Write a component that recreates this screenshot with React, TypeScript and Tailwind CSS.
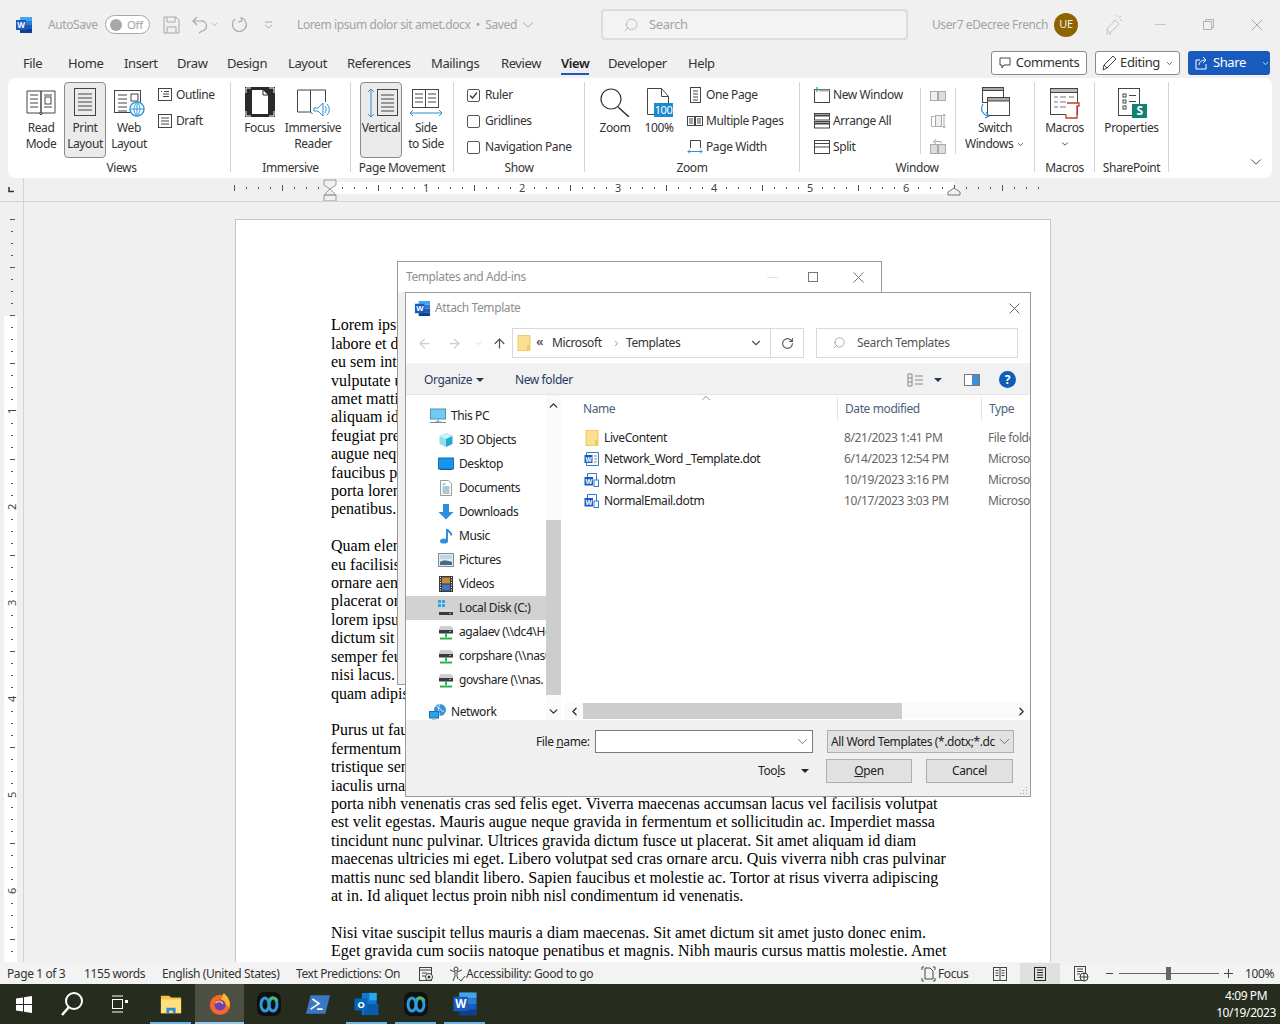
import type { ReactNode } from "react";
import { ChevronDown, ChevronUp, ChevronLeft, ChevronRight, ArrowLeft, ArrowRight, ArrowUp, RotateCw, Search } from "lucide-react";

const s = { fill: "none", stroke: "#444", strokeWidth: 1 };

function WinX({ size, color }: { size: number; color: string }) {
  return (
    <svg width={size} height={size} viewBox={`0 0 ${size} ${size}`} className="shrink-0">
      <path d={`M0.500 0.500L${size - 0.5} ${size - 0.5}M${size - 0.5} 0.500L0.500 ${size - 0.5}`} stroke={color} fill="none" />
    </svg>
  );
}

function WordIcon({ size = 18 }: { size?: number }) {
  return (
    <svg width={size} height={size} viewBox="0 0 18 18">
      <rect x="5" y="1" width="12" height="4" fill="#41a5ee" />
      <rect x="5" y="5" width="12" height="4" fill="#2b7cd3" />
      <rect x="5" y="9" width="12" height="4" fill="#185abd" />
      <rect x="5" y="13" width="12" height="4" fill="#103f91" />
      <rect x="1" y="4" width="10" height="10" fill="#185abd" />
      <text x="6" y="12" fontSize="8" fontWeight="700" fill="#fff" textAnchor="middle">W</text>
    </svg>
  );
}

function SmallDoc({ name }: { name: string }) {
  if (name === "doc") {
    return (
      <svg width="16" height="16" viewBox="0 0 16 16">
        <path d="M2.500 5V1.500h12v13h-12V12" {...s} stroke="#2b7cd3" />
        <path d="M10 5h3M10 8h3M10 11h3" {...s} stroke="#888" />
        <rect x="0.500" y="4" width="8" height="8" fill="#185abd" />
        <text x="4.500" y="10.500" fontSize="6.500" fontWeight="700" fill="#fff" textAnchor="middle">W</text>
      </svg>
    );
  }
  return (
    <svg width="16" height="16" viewBox="0 0 16 16">
      <path d="M3.500 5V1.500h9v7" {...s} stroke="#2b7cd3" />
      <rect x="10" y="8" width="4.500" height="6.500" fill="#fff" stroke="#2b7cd3" />
      <rect x="0.500" y="5" width="8.500" height="8.500" fill="#185abd" />
      <text x="4.700" y="11.700" fontSize="7" fontWeight="700" fill="#fff" textAnchor="middle">W</text>
    </svg>
  );
}

function FolderTall() {
  return (
    <svg width="14" height="16" viewBox="0 0 14 16">
      <rect x="1" y="0.500" width="12" height="15" fill="#fbe08f" stroke="#e9cb70" />
      <rect x="10" y="10" width="3" height="5.500" fill="#eccb62" />
    </svg>
  );
}

function NavIcon({ kind }: { kind: string }) {
  switch (kind) {
    case "pc":
      return (
        <svg width="18" height="16" viewBox="0 0 18 16">
          <rect x="1.500" y="1" width="15" height="10" fill="#6fcdf5" stroke="#5a8fb0" />
          <path d="M6 14h6M9 11v3M1 14.500h16" stroke="#6d8fa8" />
        </svg>
      );
    case "3d":
      return (
        <svg width="16" height="16" viewBox="0 0 16 16">
          <path d="M8 1l6.500 3v8L8 15z" fill="#23a9cf" />
          <path d="M8 1L1.500 4v8L8 15z" fill="#8fe0ee" />
          <path d="M1.500 4L8 7l6.500-3L8 1z" fill="#c8f2f6" />
        </svg>
      );
    case "desktop":
      return (
        <svg width="16" height="14" viewBox="0 0 16 14">
          <rect x="0.500" y="1" width="15" height="11" fill="#1b93ea" stroke="#0c6fbb" />
          <rect x="2" y="12" width="12" height="1" fill="#0c5b9b" />
        </svg>
      );
    case "docs":
      return (
        <svg width="14" height="16" viewBox="0 0 14 16">
          <path d="M1.500.5h8l3 3v12h-11z" fill="#fff" stroke="#9a9a9a" />
          <path d="M3.500 4h3M3.500 7h7M3.500 9h7M3.500 11h7M3.500 13h7" stroke="#5a8fb0" />
        </svg>
      );
    case "down":
      return (
        <svg width="16" height="16" viewBox="0 0 16 16">
          <path d="M5 0h6v8h4.500L8 15.500.5 8H5z" fill="#2f8de0" />
        </svg>
      );
    case "music":
      return (
        <svg width="14" height="16" viewBox="0 0 14 16">
          <ellipse cx="5" cy="13" rx="4" ry="2.600" fill="#2f8de0" />
          <path d="M8 13V1c1 2.500 4.500 3 4.500 6.500" fill="none" stroke="#2f8de0" strokeWidth="2" />
        </svg>
      );
    case "pics":
      return (
        <svg width="16" height="14" viewBox="0 0 16 14">
          <rect x="0.500" y="0.500" width="15" height="13" fill="#dfeaf5" stroke="#8a8a8a" />
          <path d="M2 9c3-2 6-2 12 0v3H2z" fill="#456a82" />
          <rect x="2" y="2" width="12" height="4" fill="#b9d8ee" />
        </svg>
      );
    case "video":
      return (
        <svg width="14" height="16" viewBox="0 0 14 16">
          <rect width="14" height="16" fill="#3a3a3a" />
          <rect x="3" y="1.500" width="8" height="6" fill="#c58a3b" />
          <rect x="3" y="8.500" width="8" height="6" fill="#3f77c2" />
          <path d="M1.500 1v14M12.500 1v14" stroke="#fff" strokeDasharray="1 1.500" />
        </svg>
      );
    case "disk":
      return (
        <svg width="16" height="16" viewBox="0 0 16 16">
          <rect x="0" y="0" width="3" height="3" fill="#29a8f0" />
          <rect x="4" y="0" width="3" height="3" fill="#29a8f0" />
          <rect x="0" y="4" width="3" height="3" fill="#29a8f0" />
          <rect x="4" y="4" width="3" height="3" fill="#29a8f0" />
          <path d="M3 9h10l2 2v4H1v-4z" fill="#d8d8d8" />
          <rect x="1" y="12" width="14" height="3" fill="#3a3a3a" />
          <rect x="11" y="13" width="2" height="1" fill="#4fe04f" />
        </svg>
      );
    case "share":
      return (
        <svg width="16" height="16" viewBox="0 0 16 16">
          <path d="M3 2h10l2 2v3H1V4z" fill="#cfcfcf" />
          <rect x="1" y="6" width="14" height="3.500" fill="#3a3a3a" />
          <rect x="11" y="7" width="2" height="1" fill="#4fe04f" />
          <path d="M8 9.500V13M2 14.500h12" stroke="#27b24a" strokeWidth="2" />
        </svg>
      );
    default:
      return (
        <svg width="18" height="18" viewBox="0 0 18 18">
          <circle cx="11" cy="7" r="6" fill="#3a93dd" />
          <path d="M7 3c3 1 5 5 8 6M11 1c-2 3-2 8 0 12" stroke="#cfe8f8" fill="none" />
          <rect x="0.500" y="8.500" width="9" height="6.500" fill="#2aa3e8" stroke="#1c6fa8" />
          <path d="M3 17h4" stroke="#6d8fa8" />
        </svg>
      );
  }
}

function RibbonIcon({ kind }: { kind: string }) {
  switch (kind) {
    case "read":
      return (
        <svg width="32" height="30" viewBox="0 0 32 30">
          <path d="M2 4l14 0v22H2zM16 4h14v22H16z" {...s} />
          <path d="M5 8h8M5 12h8M5 16h8M5 20h8M19 8h8M19 20h8" {...s} />
          <rect x="20" y="10" width="6" height="7" {...s} />
          <path d="M14 26l2 2 2-2" {...s} />
        </svg>
      );
    case "print":
      return (
        <svg width="24" height="30" viewBox="0 0 24 30">
          <rect x="1.500" y="1.500" width="21" height="27" {...s} />
          <path d="M5 7h14M5 11h14M5 15h14M5 19h14M5 23h14" {...s} />
        </svg>
      );
    case "web":
      return (
        <svg width="32" height="30" viewBox="0 0 32 30">
          <rect x="1.500" y="3.500" width="26" height="22" {...s} />
          <path d="M5 8h9M5 12h9M5 16h9M5 20h9M5 24h9" {...s} />
          <rect x="18" y="7" width="7" height="7" {...s} />
          <circle cx="24" cy="22" r="7" fill="#fff" stroke="#2f9bd8" strokeWidth="1.500" />
          <path d="M17 22h14M24 15v14M24 15c-4 4-4 10 0 14M24 15c4 4 4 10 0 14" fill="none" stroke="#2f9bd8" />
        </svg>
      );
    case "focus":
      return (
        <svg width="30" height="30" viewBox="0 0 30 30">
          <rect width="30" height="30" fill="#2a2a2a" />
          <path d="M1 6V1h5M24 1h5v5M29 24v5h-5M6 29H1v-5" fill="none" stroke="#fff" />
          <path d="M7 3h11l5 5v19H7z" fill="#fff" />
          <path d="M18 3v5h5" fill="none" stroke="#2a2a2a" />
        </svg>
      );
    case "reader":
      return (
        <svg width="34" height="32" viewBox="0 0 34 32">
          <path d="M1.500 3h13v22h-13zM14.500 3h15v12" {...s} />
          <path d="M14.500 25l2 2" {...s} />
          <path d="M18 21h4l5-5v13l-5-5h-4z" fill="#fff" stroke="#2f8fd0" />
          <path d="M29 19c1.500 1.500 1.500 5 0 7M31 17c3 3 3 8 0 11" fill="none" stroke="#2f8fd0" />
        </svg>
      );
    case "vertical":
      return (
        <svg width="36" height="32" viewBox="0 0 36 32">
          <path d="M8 2v28M5 5l3-3 3 3M5 27l3 3 3-3" fill="none" stroke="#2f8fd0" />
          <rect x="14.500" y="2.500" width="20" height="26" {...s} />
          <path d="M18 8h13M18 12h13M18 16h13M18 20h13M18 24h13" {...s} />
        </svg>
      );
    case "side":
      return (
        <svg width="34" height="30" viewBox="0 0 34 30">
          <rect x="3.500" y="2.500" width="13" height="18" {...s} />
          <rect x="16.500" y="2.500" width="13" height="18" {...s} />
          <path d="M6 7h8M6 11h8M6 15h8M19 7h8M19 11h8M19 15h8" {...s} />
          <path d="M1 26h32M4 23l-3 3 3 3M30 23l3 3-3 3" fill="none" stroke="#2f8fd0" />
        </svg>
      );
    case "zoom":
      return (
        <svg width="32" height="30" viewBox="0 0 32 30">
          <circle cx="12" cy="12" r="10" fill="none" stroke="#333" strokeWidth="1.200" />
          <path d="M19 20l11 10" stroke="#333" strokeWidth="1.600" />
        </svg>
      );
    case "hundred":
      return (
        <svg width="28" height="30" viewBox="0 0 28 30">
          <path d="M2.500 1.500h14l7 8v18h-21z" fill="#fff" stroke="#444" />
          <path d="M16.500 1.500v8h7" {...s} />
          <rect x="9" y="16" width="19" height="14" fill="#1c8ad0" />
          <text x="18.500" y="27" fontSize="11" fill="#fff" textAnchor="middle" letterSpacing="-0.5">100</text>
        </svg>
      );
    case "switch":
      return (
        <svg width="32" height="32" viewBox="0 0 32 32">
          <rect x="3.500" y="0.500" width="21" height="15" {...s} />
          <rect x="3.500" y="0.500" width="21" height="3" fill="#aaa" stroke="#444" />
          <rect x="8.500" y="10.500" width="22" height="18" fill="#fff" stroke="#444" />
          <rect x="8.500" y="10.500" width="22" height="3.500" fill="#aaa" stroke="#444" />
          <path d="M4 17c-3 5-1 11 6 12M7 25l3 4-4 2" fill="none" stroke="#2f8fd0" strokeWidth="1.200" />
        </svg>
      );
    case "macros":
      return (
        <svg width="32" height="32" viewBox="0 0 32 32">
          <rect x="1.500" y="1.500" width="27" height="26" {...s} />
          <rect x="1.500" y="1.500" width="27" height="4" fill="#bbb" stroke="#444" />
          <path d="M5 10h4M11 10h6M20 10h5M5 15h4M11 15h6M5 20h4M11 20h6" fill="none" stroke="#777" />
          <path d="M18 16h12v3h-2v12H17v-3h-1" fill="#fff" stroke="#c8392b" strokeWidth="1.300" />
        </svg>
      );
    default:
      return (
        <svg width="30" height="32" viewBox="0 0 30 32">
          <rect x="1.500" y="1.500" width="21" height="27" {...s} />
          <rect x="6" y="7" width="3" height="3" {...s} />
          <rect x="6" y="13" width="3" height="3" {...s} />
          <rect x="6" y="19" width="3" height="3" {...s} />
          <path d="M12 8.500h7M12 14.500h7" {...s} />
          <rect x="15" y="17" width="15" height="14" fill="#108272" />
          <text x="22.500" y="28" fontSize="12" fontWeight="700" fill="#fff" textAnchor="middle">S</text>
        </svg>
      );
  }
}

function SmallIcon({ kind }: { kind: string }) {
  const lines: Record<string, ReactNode> = {
    outline: <><rect x="1.500" y="1.500" width="13" height="12" {...s} /><path d="M4 4.500h1M7 4.500h5M6 7h6M6 9.500h6" {...s} /></>,
    draft: <><rect x="1.500" y="1.500" width="13" height="13" {...s} /><path d="M4 5h8M4 8h8M4 11h8" {...s} /></>,
    onepage: <><rect x="3.500" y="0.500" width="10" height="15" {...s} /><path d="M6 4h5M6 7h5M6 10h5M6 13h5" {...s} /></>,
    multi: <><rect x="0.500" y="3.500" width="7" height="9" {...s} /><rect x="8.500" y="3.500" width="7" height="9" {...s} /><path d="M2 6h4M2 8h4M2 10h4M10 6h4M10 8h4M10 10h4" {...s} /></>,
    width: <><path d="M3.500 9V1.500h10V9" {...s} /><path d="M1 12.500h14M3 10.500l-2 2 2 2M13 10.500l2 2-2 2" fill="none" stroke="#2f8fd0" /></>,
    newwin: <><rect x="0.500" y="2.500" width="15" height="13" {...s} /><rect x="5" y="2.500" width="10.500" height="2" fill="#aaa" /><path d="M3 0v5M0.500 2.500h5" stroke="#1e8a3c" /></>,
    arrange: <><rect x="0.500" y="0.500" width="15" height="6.500" {...s} /><rect x="0.500" y="8.500" width="15" height="6.500" {...s} /><path d="M1 2.500h14M1 10.500h14" stroke="#444" strokeWidth="2" /></>,
    split: <><rect x="0.500" y="1.500" width="15" height="13" {...s} /><path d="M1 4.500h14M1 8h14" {...s} /></>,
    ghost1: <><rect x="0.500" y="3.500" width="7" height="9" fill="#eee" stroke="#aaa" /><rect x="8.500" y="3.500" width="7" height="9" fill="#ddd" stroke="#aaa" /></>,
    ghost2: <><path d="M1.500 3.500h3M1.500 3.500v10h3" fill="none" stroke="#aaa" /><rect x="5.500" y="2.500" width="6" height="11" fill="#eee" stroke="#aaa" /><path d="M14 1v14M12.500 3l1.500-2 1.500 2M12.500 13l1.500 2 1.500-2" fill="none" stroke="#aaa" /></>,
    ghost3: <><path d="M6 1L3.500 3.500 6 6M4 3.500h7v2" fill="none" stroke="#aaa" /><rect x="0.500" y="6.500" width="7" height="9" fill="#ddd" stroke="#aaa" /><rect x="8.500" y="6.500" width="7" height="9" fill="#ddd" stroke="#aaa" /></>,
  };
  return <svg width="16" height="16" viewBox="0 0 16 16" className="shrink-0">{lines[kind]}</svg>;
}

function BigButton({ icon, top, bottom, className, selected }: { icon: string; top: string; bottom?: ReactNode; className: string; selected?: boolean }) {
  return (
    <div className={`${className} h-[76px] flex flex-col items-center rounded-[4px] border ${selected ? "bg-[#ebebeb] border-[#8a8a8a]" : "border-transparent"}`}>
      <div className="h-[37px] pt-[4px] flex items-start justify-center">
        <RibbonIcon kind={icon} />
      </div>
      <div className="leading-[16px] text-center whitespace-nowrap">{top}</div>
      {bottom && <div className="leading-[16px] text-center whitespace-nowrap">{bottom}</div>}
    </div>
  );
}

function SmallButton({ icon, label }: { icon: string; label: string }) {
  return (
    <div className="h-[26px] shrink-0 flex items-center gap-[3px] whitespace-nowrap">
      <SmallIcon kind={icon} />
      <span>{label}</span>
    </div>
  );
}

function Group({ label, className, labelClass, children }: { label: string; className: string; labelClass?: string; children: ReactNode }) {
  return (
    <div className={`${className} h-[90px] border-r border-[#d4d4d4] flex flex-col`}>
      <div className="h-[76px] flex">{children}</div>
      <div className={`leading-[20px] text-center text-[#333] ${labelClass ?? ""}`}>{label}</div>
    </div>
  );
}

function Check({ on, label }: { on?: boolean; label: string }) {
  return (
    <div className="h-[26px] shrink-0 flex items-center gap-[5px] whitespace-nowrap">
      <div className="w-[13px] h-[13px] border border-[#555] rounded-[2px] flex items-center justify-center">
        {on && (
          <svg width="9" height="9" viewBox="0 0 9 9">
            <path d="M1 4.500l2.500 2.500L8 1.500" fill="none" stroke="#333" strokeWidth="1.200" />
          </svg>
        )}
      </div>
      <span>{label}</span>
    </div>
  );
}

const tabs = [
  { label: "File", w: "w-[45px]" },
  { label: "Home", w: "w-[56px]" },
  { label: "Insert", w: "w-[53px]" },
  { label: "Draw", w: "w-[50px]" },
  { label: "Design", w: "w-[61px]" },
  { label: "Layout", w: "w-[59px]" },
  { label: "References", w: "w-[84px]" },
  { label: "Mailings", w: "w-[70px]" },
  { label: "Review", w: "w-[60px]" },
  { label: "View", w: "w-[47px]" },
  { label: "Developer", w: "w-[80px]" },
  { label: "Help", w: "w-[40px]" },
];

function TitleBar() {
  return (
    <div className="h-[48px] pt-[1px] flex items-center text-[#a3a3a3] text-[12px]">
      <div className="ml-[15px] w-[18px]"><WordIcon /></div>
      <span className="ml-[15px] w-[52px]">AutoSave</span>
      <div className="ml-[5px] w-[45px] h-[19px] rounded-full border border-[#a8a8a8] bg-white flex items-center pl-[4px] gap-[5px] text-[11.500px]">
        <div className="w-[12px] h-[12px] rounded-full bg-[#a8a8a8]" />
        <span>Off</span>
      </div>
      <svg className="ml-[13px]" width="17" height="18" viewBox="0 0 17 18">
        <path d="M1 1h12l3 3v13H1zM4 1v5h8V1M4 17v-6h9v6" fill="none" stroke="#a8a8a8" />
      </svg>
      <svg className="ml-[12px]" width="16" height="18" viewBox="0 0 16 18">
        <path d="M5 1L1 5l4 4M1 5h8a5 5 0 0 1 1 10l-3 2" fill="none" stroke="#a8a8a8" strokeWidth="1.200" />
      </svg>
      <ChevronDown className="ml-[2px] text-[#a8a8a8]" size={9} />
      <svg className="ml-[11px]" width="18" height="18" viewBox="0 0 18 18">
        <path d="M5 3a7 7 0 1 0 7-1M11 1l1 4 -4 1" fill="none" stroke="#a8a8a8" strokeWidth="1.200" />
      </svg>
      <svg className="ml-[16px]" width="9" height="10" viewBox="0 0 9 10">
        <path d="M1 2h7M1 5l3.500 3L8 5" fill="none" stroke="#a8a8a8" />
      </svg>
      <span className="ml-[24px] w-[304px] whitespace-nowrap flex items-center gap-[2px]">
        Lorem ipsum dolor sit amet.docx&nbsp; •&nbsp; Saved <ChevronDown size={18} strokeWidth={1.300} />
      </span>
      <div className="w-[307px] h-[31px] border-2 border-[#dcdcdc] rounded-[4px] bg-[#f3f3f3] flex items-center pl-[20px] gap-[10px] text-[13px]">
        <Search size={16} className="scale-x-[-1]" strokeWidth={1} />
        <span>Search</span>
      </div>
      <span className="ml-[24px] w-[122px] whitespace-nowrap">User7 eDecree French</span>
      <div className="w-[24px] h-[24px] rounded-full bg-[#8f6300] text-[#eee] text-[11px] flex items-center justify-center">UE</div>
      <svg className="ml-[27px]" width="18" height="22" viewBox="0 0 18 22">
        <path d="M5 19L2 15l8-9 4 4zM2 15v5h4M12 3V1M15 6h2M14 4l2-2" fill="none" stroke="#c4c4c4" />
      </svg>
      <div className="ml-[32px] w-[11px] h-[1px] bg-[#c4c4c4]" />
      <svg className="ml-[37px]" width="11" height="11" viewBox="0 0 11 11">
        <path d="M0.500 2.500h8v8h-8zM2.500 2.500v-2h8v8h-2" fill="none" stroke="#b0b0b0" />
      </svg>
      <div className="ml-[37px]"><WinX size={12} color="#a8a8a8" /></div>
    </div>
  );
}

function TabRow() {
  return (
    <div className="h-[30px] pt-[1px] flex items-center pl-[23px] pr-[10px] text-[13px] text-[#333]">
      {tabs.map((t) => (
        <div key={t.label} className={`${t.w} h-full flex items-center relative`}>
          <span className={t.label === "View" ? "font-semibold text-[#222] border-b-2 border-[#185abd] leading-[20px] mt-[1px]" : ""}>{t.label}</span>
        </div>
      ))}
      <div className="ml-auto flex items-center gap-[8px] -mt-[1px]">
        <div className="w-[96px] h-[24px] border border-[#8a8a8a] rounded-[3px] bg-white flex items-center justify-center gap-[5px]">
          <svg width="12" height="12" viewBox="0 0 12 12"><path d="M1 1h10v7H5l-2 3V8H1z" fill="none" stroke="#444" /></svg>
          Comments
        </div>
        <div className="w-[85px] h-[24px] border border-[#8a8a8a] rounded-[3px] bg-white flex items-center justify-center gap-[3px]">
          <svg width="16" height="18" viewBox="0 0 16 18"><path d="M2 16l1-5L12 2l3 3-9 9zM3 11l3 3" fill="none" stroke="#444" /></svg>
          Editing <ChevronDown size={9} className="ml-[2px]" />
        </div>
        <div className="w-[82px] h-[24px] rounded-[3px] bg-[#185abd] text-white flex items-center pl-[7px] gap-[5px]">
          <svg width="13" height="14" viewBox="0 0 13 14"><path d="M5 4H1v9h10V8M4 9c0-3 3-5 6-5M8 1l3 3-3 3" fill="none" stroke="#fff" /></svg>
          Share
          <ChevronDown size={9} className="ml-[10px]" />
        </div>
      </div>
    </div>
  );
}

function Ribbon() {
  return (
    <div className="ml-[8px] w-[1264px] h-[100px] bg-white rounded-[7px] pt-[4px] flex text-[12px] text-[#333]">
      <Group label="Views" className="w-[223px]" labelClass="pl-[5px]">
        <div className="w-[10px]" />
        <BigButton icon="read" top="Read" bottom="Mode" className="w-[46px]" />
        <BigButton icon="print" top="Print" bottom="Layout" className="w-[42px]" selected />
        <BigButton icon="web" top="Web" bottom="Layout" className="w-[46px]" />
        <div className="ml-[5px] flex flex-col">
          <SmallButton icon="outline" label="Outline" />
          <SmallButton icon="draft" label="Draft" />
        </div>
      </Group>
      <Group label="Immersive" className="w-[120px]">
        <div className="w-[8px]" />
        <BigButton icon="focus" top="Focus" className="w-[41px]" />
        <BigButton icon="reader" top="Immersive" bottom="Reader" className="w-[66px]" />
      </Group>
      <Group label="Page Movement" className="w-[103px]">
        <div className="w-[9px]" />
        <BigButton icon="vertical" top="Vertical" className="w-[42px]" selected />
        <BigButton icon="side" top="Side" bottom="to Side" className="w-[48px]" />
      </Group>
      <Group label="Show" className="w-[131px]">
        <div className="pl-[13px] flex flex-col">
          <Check on label="Ruler" />
          <Check label="Gridlines" />
          <Check label="Navigation Pane" />
        </div>
      </Group>
      <Group label="Zoom" className="w-[215px]">
        <div className="w-[9px]" />
        <BigButton icon="zoom" top="Zoom" className="w-[42px]" />
        <BigButton icon="hundred" top="100%" className="w-[46px]" />
        <div className="ml-[5px] flex flex-col">
          <SmallButton icon="onepage" label="One Page" />
          <SmallButton icon="multi" label="Multiple Pages" />
          <SmallButton icon="width" label="Page Width" />
        </div>
      </Group>
      <Group label="Window" className="w-[235px]">
        <div className="pl-[14px] w-[120px] flex flex-col">
          <SmallButton icon="newwin" label="New Window" />
          <SmallButton icon="arrange" label="Arrange All" />
          <SmallButton icon="split" label="Split" />
        </div>
        <div className="w-[36px] h-[66px] mt-[6px] border-x border-[#d4d4d4] flex flex-col items-center justify-between">
          <SmallIcon kind="ghost1" />
          <SmallIcon kind="ghost2" />
          <SmallIcon kind="ghost3" />
        </div>
        <div className="w-[3px]" />
        <BigButton icon="switch" top="Switch" bottom={<>Windows <ChevronDown size={9} className="inline" /></>} className="w-[72px]" />
      </Group>
      <Group label="Macros" className="w-[60px]">
        <div className="w-full h-[76px] flex flex-col items-center pt-[5px]">
          <RibbonIcon kind="macros" />
          <div className="leading-[16px] mt-[1px]">Macros</div>
          <ChevronDown size={10} className="mt-[3px]" />
        </div>
      </Group>
      <Group label="SharePoint" className="w-[74px]">
        <BigButton icon="props" top="Properties" className="w-full" />
      </Group>
      <div className="flex-1 flex items-end justify-end pr-[7px] pb-[7px]">
        <ChevronDown size={18} strokeWidth={1.200} />
      </div>
    </div>
  );
}

const hTicks = Array.from({ length: 68 }, (_, i) => 234 + i * 12);

function HRuler() {
  return (
    <svg width="1280" height="24" viewBox="0 0 1280 24" className="block">
      <rect x="330" y="4" width="624" height="12" fill="#fff" />
      {hTicks.map((x) => {
        const n = x - 330;
        if (n > 0 && n % 96 === 0 && n / 96 < 7) {
          return <text key={x} x={x} y="14" fontSize="11" fill="#444" textAnchor="middle">{n / 96}</text>;
        }
        return n % 48 === 0 ? (
          <path key={x} d={`M${x + 0.5} 7v6`} stroke="#555" />
        ) : (
          <path key={x} d={`M${x + 0.5} 9v2`} stroke="#555" />
        );
      })}
      <path d="M324 2h12v5l-6 4-6-4zM324 17l6-6 6 6zM324 17h12v6h-12z" fill="#f0f0f0" stroke="#999" />
      <path d="M948 17v-3l6-4 6 4v3z" fill="#f0f0f0" stroke="#777" />
      <path d="M0 23.500h1280" stroke="#d4d4d4" />
      <path d="M23.500 0v24" stroke="#d4d4d4" />
      <path d="M9 9v4.500h5" fill="none" stroke="#333" strokeWidth="1.500" />
    </svg>
  );
}

const vTicks = Array.from({ length: 62 }, (_, i) => 219 - 202 + i * 12);

function VRuler() {
  return (
    <svg width="24" height="760" viewBox="0 0 24 760" className="block shrink-0">
      <rect x="4" y="114" width="13" height="646" fill="#fff" />
      <path d="M23.500 0v760" stroke="#d4d4d4" />
      {vTicks.map((y) => {
        const n = y - 113;
        if (n > 0 && n % 96 === 0) {
          return <text key={y} x="12" y={y + 4} fontSize="11" fill="#444" textAnchor="middle" transform={`rotate(-90 12 ${y})`}>{n / 96}</text>;
        }
        return n % 48 === 0 ? (
          <path key={y} d={`M10 ${y + 0.5}h5`} stroke="#555" />
        ) : (
          <path key={y} d={`M11 ${y + 0.5}h2`} stroke="#555" />
        );
      })}
    </svg>
  );
}

const paragraphs = [
  [
    "Lorem ipsum dolor sit amet, consectetur adipiscing elit, sed do eiusmod tempor incididunt ut",
    "labore et dolore magna aliqua. Ornare quam viverra orci sagittis eu volutpat odio facilisis",
    "eu sem integer vitae justo eget magna fermentum iaculis eu non diam phasellus vestibulum",
    "vulputate ut pharetra sit amet aliquam id diam maecenas ultricies mi eget mauris pharetra",
    "amet mattis vulputate enim nulla aliquet porttitor lacus luctus accumsan tortor posuere ac",
    "aliquam id diam maecenas ultricies mi eget mauris pharetra et ultrices neque ornare aenean",
    "feugiat pretium nibh ipsum consequat nisl vel pretium lectus quam id leo in vitae turpis",
    "augue neque gravida in fermentum et sollicitudin ac orci phasellus egestas tellus rutrum",
    "faucibus purus in massa tempor nec feugiat nisl pretium fusce id velit ut tortor pretium",
    "porta lorem mollis aliquam ut porttitor leo a diam sollicitudin tempor id eu nisl nunc mi",
    "penatibus.",
  ],
  [
    "Quam elementum pulvinar etiam non quam lacus suspendisse faucibus interdum posuere lorem",
    "eu facilisis sed odio morbi quis commodo odio aenean sed adipiscing diam donec adipiscing",
    "ornare aenean euismod elementum nisi quis eleifend quam adipiscing vitae proin sagittis",
    "placerat orci nulla pellentesque dignissim enim sit amet venenatis urna cursus eget nunc",
    "lorem ipsum dolor sit amet consectetur adipiscing elit ut aliquam purus sit amet luctus",
    "dictum sit amet justo donec enim diam vulputate ut pharetra sit amet aliquam id diam",
    "semper feugiat nibh sed pulvinar proin gravida hendrerit lectus a molestie lorem ipsum",
    "nisi lacus. Sed viverra ipsum nunc aliquet bibendum enim facilisis gravida neque convallis",
    "quam adipiscing.",
  ],
  [
    "Purus ut faucibus pulvinar elementum integer enim neque volutpat ac tincidunt vitae semper",
    "fermentum leo vel orci porta non pulvinar neque laoreet suspendisse interdum consectetur",
    "tristique senectus et netus et malesuada fames ac turpis egestas integer eget aliquet nibh",
    "iaculis urna id volutpat lacus laoreet non curabitur gravida arcu ac tortor dignissim",
    "porta nibh venenatis cras sed felis eget. Viverra maecenas accumsan lacus vel facilisis volutpat",
    "est velit egestas. Mauris augue neque gravida in fermentum et sollicitudin ac. Imperdiet massa",
    "tincidunt nunc pulvinar. Ultrices gravida dictum fusce ut placerat. Sit amet aliquam id diam",
    "maecenas ultricies mi eget. Libero volutpat sed cras ornare arcu. Quis viverra nibh cras pulvinar",
    "mattis nunc sed blandit libero. Sapien faucibus et molestie ac. Tortor at risus viverra adipiscing",
    "at in. Id aliquet lectus proin nibh nisl condimentum id venenatis.",
  ],
  [
    "Nisi vitae suscipit tellus mauris a diam maecenas. Sit amet dictum sit amet justo donec enim.",
    "Eget gravida cum sociis natoque penatibus et magnis. Nibh mauris cursus mattis molestie. Amet",
    "aliquam vestibulum morbi blandit cursus risus at ultrices mi tempus imperdiet nulla",
  ],
];

function DocArea() {
  return (
    <div className="h-[760px] flex overflow-hidden">
      <VRuler />
      <div className="flex-1 pl-[211px] pt-[17px]">
        <div className="w-[816px] h-[800px] bg-white border border-[#c6c6c6] pl-[95px] pt-[96.4px] font-['Liberation_Serif',serif] text-[16px] leading-[18.4px] tracking-normal text-black">
          {paragraphs.map((p, i) => (
            <div key={i} className="mb-[18.4px]">
              {p.map((l) => (
                <div key={l} className="whitespace-nowrap">{l}</div>
              ))}
            </div>
          ))}
        </div>
      </div>
    </div>
  );
}

function StatusBar() {
  return (
    <div className="h-[22px] pt-[1px] bg-[#f3f3f3] flex items-center text-[12px] text-[#333] whitespace-nowrap">
      <span className="ml-[7px] w-[77px]">Page 1 of 3</span>
      <span className="w-[78px]">1155 words</span>
      <span className="w-[134px]">English (United States)</span>
      <span className="w-[122px]">Text Predictions: On</span>
      <svg width="16" height="16" viewBox="0 0 16 16" className="mr-[15px]">
        <rect x="1.500" y="1.500" width="12" height="13" {...s} />
        <path d="M1.500 4h12M4 7h5M4 10h3" {...s} />
        <circle cx="11" cy="11" r="3.500" fill="#fff" stroke="#333" />
        <circle cx="11" cy="11" r="1.500" fill="#333" />
      </svg>
      <svg width="17" height="16" viewBox="0 0 17 16">
        <circle cx="7" cy="3" r="2" {...s} />
        <path d="M1 4l5 2v4l-2 5M13 4l-5 2v4l1 3M10 13l2 2 4-5" {...s} />
      </svg>
      <span className="w-[455px]">Accessibility: Good to go</span>
      <svg width="15" height="16" viewBox="0 0 15 16" className="mr-[2px]">
        <path d="M1 4V1h2M14 4V1h-2M1 12v3h2M14 12v3h-2M4 13V2h5l3 3v8z" {...s} />
      </svg>
      <span className="w-[55px]">Focus</span>
      <svg width="14" height="14" viewBox="0 0 14 14" className="mr-[13px]">
        <rect x="0.500" y="0.500" width="13" height="13" {...s} />
        <path d="M7 0v14M2.500 3.500h3M2.500 6h3M2.500 8.500h3M8.500 3.500h3M8.500 6h3M8.500 8.500h3" {...s} />
      </svg>
      <div className="w-[40px] h-full bg-[#e0e0e0] flex items-center justify-center">
        <svg width="12" height="14" viewBox="0 0 12 14">
          <rect x="0.500" y="0.500" width="11" height="13" {...s} stroke="#222" />
          <path d="M3 3h6M3 5.500h6M3 8h6M3 10.500h6" {...s} stroke="#222" />
        </svg>
      </div>
      <svg width="16" height="16" viewBox="0 0 16 16" className="ml-[13px]">
        <rect x="1.500" y="0.500" width="11" height="14" {...s} />
        <path d="M4 3h6M4 5.500h6M4 8h3" {...s} />
        <circle cx="11" cy="11" r="4" fill="#fff" stroke="#333" />
        <path d="M7 11h8M11 7v8" stroke="#333" />
      </svg>
      <div className="ml-[17px] w-[7px] h-[1px] bg-[#444]" />
      <div className="ml-[6px] w-[100px] h-[1px] bg-[#666] relative">
        <div className="absolute left-[47px] -top-[6px] w-[5px] h-[13px] bg-[#666]" />
      </div>
      <svg width="9" height="9" viewBox="0 0 9 9" className="ml-[5px]"><path d="M4.500 0v9M0 4.500h9" stroke="#444" /></svg>
      <span className="ml-[12px]">100%</span>
    </div>
  );
}

function Taskbar() {
  return (
    <div className="h-[40px] bg-[#272d1e] flex items-center text-white text-[12px] relative">
      <div className="w-[48px] flex justify-center">
        <svg width="16" height="17" viewBox="0 0 16 17"><path d="M0 2.500l7-1v6.500H0zM8 1.300L16 0v8H8zM0 9h7v6.500l-7-1zM8 9h8v8l-8-1.300z" fill="#fff" /></svg>
      </div>
      <div className="w-[48px] flex justify-center">
        <svg width="24" height="26" viewBox="0 0 24 26"><circle cx="14" cy="10" r="8" fill="none" stroke="#fff" strokeWidth="2" /><path d="M9 16l-7 8" stroke="#fff" strokeWidth="2.500" /></svg>
      </div>
      <div className="w-[48px] flex justify-center">
        <svg width="18" height="18" viewBox="0 0 18 18"><rect x="1.500" y="4.500" width="10" height="9" fill="none" stroke="#fff" /><path d="M1 1h11M1 17h11" stroke="#fff" /><rect x="14" y="5" width="3" height="3" fill="#fff" /></svg>
      </div>
      <div className="w-[2px]" />
      <TaskItem active>
        <svg width="24" height="22" viewBox="0 0 24 24"><path d="M1 3h9l2 2h11v17H1z" fill="#f5c242" /><rect x="1" y="7" width="22" height="15" fill="#ffe07d" /><path d="M7 22v-6h10v6h-3v-3h-4v3z" fill="#2d8ad6" /></svg>
      </TaskItem>
      <TaskItem active highlight>
        <svg width="24" height="24" viewBox="0 0 26 26"><circle cx="13" cy="14" r="11" fill="#f7662a" /><path d="M17 1c5 4 8 10 6 16L14 8z" fill="#ffb52c" /><circle cx="13" cy="14" r="6" fill="#6b3fb8" /><path d="M8 12c3-3 7-2 8 1" fill="none" stroke="#ffb52c" strokeWidth="2" /></svg>
      </TaskItem>
      <TaskItem>
        <Webex />
      </TaskItem>
      <TaskItem>
        <svg width="24" height="19" viewBox="0 0 26 20"><path d="M5 0h21l-5 20H0z" fill="#3b78c4" /><path d="M7 4l7 5-9 6M12 15h6" fill="none" stroke="#fff" strokeWidth="1.800" /></svg>
      </TaskItem>
      <TaskItem active>
        <svg width="25" height="24" viewBox="0 0 26 26"><rect x="8" y="1" width="16" height="24" fill="#0f78d4" /><rect x="16" y="1" width="8" height="8" fill="#28a8ea" /><path d="M10 13h16v12H10z" fill="#0a5ba8" /><rect x="0" y="7" width="14" height="13" fill="#0364b8" /><text x="7" y="17" fontSize="10" fontWeight="700" fill="#fff" textAnchor="middle">O</text></svg>
      </TaskItem>
      <TaskItem active>
        <Webex />
      </TaskItem>
      <TaskItem active>
        <WordIcon size={26} />
      </TaskItem>
      <div className="ml-auto pr-[4px] text-center leading-[17px] text-[12px]">
        <div>4:09 PM</div>
        <div>10/19/2023</div>
      </div>
    </div>
  );
}

function Webex() {
  return (
    <svg width="24" height="24" viewBox="0 0 24 24">
      <rect width="24" height="24" rx="7" fill="#101010" />
      <ellipse cx="8" cy="12.500" rx="4" ry="6.500" fill="none" stroke="#2f9bd8" strokeWidth="3" />
      <ellipse cx="16" cy="12.500" rx="4" ry="6.500" fill="none" stroke="#2f9bd8" strokeWidth="3" />
      <path d="M13 8c1-3 6-3 7 1" fill="none" stroke="#45b96c" strokeWidth="3" />
    </svg>
  );
}

function TaskItem({ children, active, highlight }: { children: ReactNode; active?: boolean; highlight?: boolean }) {
  return (
    <div className={`w-[49px] h-[40px] flex items-center justify-center relative ${highlight ? "bg-[#4b5042]" : ""}`}>
      {children}
      {active && <div className={`absolute bottom-0 h-[2px] ${highlight ? "bg-[#8fc7ee] left-0 right-0" : "bg-[#6eb4e6] left-[4px] right-[4px]"}`} />}
    </div>
  );
}

const navItems = [
  { kind: "pc", label: "This PC", cls: "pl-[22px]" },
  { kind: "3d", label: "3D Objects", cls: "pl-[30px]" },
  { kind: "desktop", label: "Desktop", cls: "pl-[30px]" },
  { kind: "docs", label: "Documents", cls: "pl-[30px]" },
  { kind: "down", label: "Downloads", cls: "pl-[30px]" },
  { kind: "music", label: "Music", cls: "pl-[30px]" },
  { kind: "pics", label: "Pictures", cls: "pl-[30px]" },
  { kind: "video", label: "Videos", cls: "pl-[30px]" },
  { kind: "disk", label: "Local Disk (C:)", cls: "pl-[30px] bg-[#d2d2d2]" },
  { kind: "share", label: "agalaev (\\\\dc4\\Home", cls: "pl-[30px]" },
  { kind: "share", label: "corpshare (\\\\nas01", cls: "pl-[30px]" },
  { kind: "share", label: "govshare (\\\\nas.", cls: "pl-[30px] mb-[8px]" },
  { kind: "net", label: "Network", cls: "pl-[22px]" },
];

const files = [
  { icon: "folder", name: "LiveContent", date: "8/21/2023 1:41 PM", type: "File folder" },
  { icon: "doc", name: "Network_Word _Template.dot", date: "6/14/2023 12:54 PM", type: "Microsoft Word" },
  { icon: "dotm", name: "Normal.dotm", date: "10/19/2023 3:16 PM", type: "Microsoft Word" },
  { icon: "dotm", name: "NormalEmail.dotm", date: "10/17/2023 3:03 PM", type: "Microsoft Word" },
];

function BackDialog() {
  return (
    <div className="absolute left-[397px] top-[261px] w-[485px] h-[424px] bg-[#f0f0f0] border border-[#9a9a9a] text-[12px]">
      <div className="h-[30px] bg-white flex items-center pl-[8px] text-[#8e8e8e]">
        <span className="flex-1">Templates and Add-ins</span>
        <div className="w-[11px] h-[1px] bg-[#e2e2e2] mr-[30px]" />
        <div className="w-[10px] h-[10px] border border-[#777] mr-[35px]" />
        <div className="mr-[17px]"><WinX size={11} color="#777" /></div>
      </div>
    </div>
  );
}

function AttachDialog() {
  return (
    <div className="absolute left-[405px] top-[292px] w-[626px] h-[505px] bg-white border border-[#9a9a9a] flex flex-col text-[12px] text-[#222]">
      <div className="h-[30px] flex items-center pl-[8px] shrink-0">
        <WordIcon size={17} />
        <span className="ml-[4px] text-[#8e8e8e] flex-1">Attach Template</span>
        <div className="mr-[10px]"><WinX size={11} color="#666" /></div>
      </div>
      <div className="h-[40px] flex items-center shrink-0 text-[#333]">
        <ArrowLeft size={15} className="ml-[11px] text-[#ccc]" />
        <ArrowRight size={15} className="ml-[15px] text-[#ccc]" />
        <ChevronDown size={9} className="ml-[12px] text-[#ccc]" />
        <ArrowUp size={15} className="ml-[9px] text-[#555]" />
        <div className="ml-[5px] w-[292px] h-[30px] border border-[#d9d9d9] flex items-center">
          <div className="ml-[4px]"><FolderTall /></div>
          <span className="ml-[5px] w-[16px] text-[#555] text-[13px] font-semibold leading-none -mt-[3px]">«</span>
          <span className="w-[54px]">Microsoft</span>
          <div className="w-[20px] flex justify-center"><ChevronRight size={9} className="text-[#777]" /></div>
          <span className="flex-1">Templates</span>
          <ChevronDown size={14} className="mr-[7px] text-[#555]" strokeWidth={2} />
          <div className="w-[33px] h-full border-l border-[#d9d9d9] flex items-center justify-center">
            <RotateCw size={13} className="text-[#555]" strokeWidth={2} />
          </div>
        </div>
        <div className="ml-[12px] w-[202px] h-[30px] border border-[#d9d9d9] flex items-center pl-[15px] text-[#555]">
          <Search size={14} className="scale-x-[-1] text-[#777]" strokeWidth={1} />
          <span className="ml-[11px]">Search Templates</span>
        </div>
      </div>
      <div className="h-[32px] pt-[2px] bg-[#f1f1f1] flex items-center shrink-0 text-[#1f3a5f] border-b border-[#e5e5e5]">
        <span className="ml-[18px] w-[52px]">Organize</span>
        <div className="w-0 h-0 border-x-[4px] border-x-transparent border-t-[4px] border-t-[#1f3a5f]" />
        <span className="ml-[31px]">New folder</span>
        <div className="ml-auto flex items-center">
          <svg width="18" height="14" viewBox="0 0 18 14">
            <path d="M1 1h4v12H1zM1 5h4M1 9h4" fill="none" stroke="#888" />
            <path d="M8 3h8M8 7h8M8 11h8" stroke="#888" />
          </svg>
          <div className="ml-[9px] w-0 h-0 border-x-[4px] border-x-transparent border-t-[4px] border-t-[#1f3a5f]" />
          <svg width="16" height="12" viewBox="0 0 16 12" className="ml-[22px]">
            <rect x="0.500" y="0.500" width="15" height="11" fill="#fff" stroke="#777" />
            <rect x="8" y="1" width="7" height="10" fill="#3e8fd8" />
          </svg>
          <div className="ml-[19px] mr-[14px] w-[17px] h-[17px] rounded-full bg-[#0f5db5] text-white text-[12px] font-bold flex items-center justify-center">?</div>
        </div>
      </div>
      <div className="h-[325px] flex overflow-hidden shrink-0">
        <div className="w-[140px] pt-[9px] overflow-hidden shrink-0">
          {navItems.map((n) => (
            <div key={n.label} className={`h-[24px] flex items-center whitespace-nowrap ${n.cls}`}>
              <div className="w-[20px] flex justify-center shrink-0"><NavIcon kind={n.kind} /></div>
              <span className="ml-[3px]">{n.label}</span>
            </div>
          ))}
        </div>
        <div className="w-[15px] bg-[#fafafa] flex flex-col items-center shrink-0">
          <ChevronUp size={13} className="mt-[4px] text-[#333] shrink-0" strokeWidth={2.500} />
          <div className="mt-[108px] w-full h-[175px] bg-[#cdcdcd] shrink-0" />
          <ChevronDown size={13} className="mt-[10px] text-[#333] shrink-0" strokeWidth={2.500} />
        </div>
        <div className="w-[4px]" />
        <div className="flex-1 flex flex-col min-w-0">
          <div className="h-[26px] pt-[2px] flex items-center text-[#4c607a] relative shrink-0">
            <ChevronUp size={14} className="absolute left-[134px] top-[-4px] text-[#666]" strokeWidth={1.200} />
            <div className="w-[272px] shrink-0 pl-[18px]">Name</div>
            <div className="w-[144px] shrink-0 pl-[7px] h-full flex items-center border-l border-[#e5e5e5]">Date modified</div>
            <div className="pl-[7px] h-full flex items-center border-l border-[#e5e5e5]">Type</div>
          </div>
          <div className="flex-1 pt-[6px] overflow-hidden">
            {files.map((f) => (
              <div key={f.name} className="h-[21px] flex items-center whitespace-nowrap">
                <div className="w-[272px] shrink-0 pl-[19px] flex items-center gap-[4px] text-[#222]">
                  <div className="w-[16px] flex justify-center">
                    {f.icon === "folder" ? <FolderTall /> : <SmallDoc name={f.icon} />}
                  </div>
                  {f.name}
                </div>
                <div className="w-[144px] shrink-0 pl-[7px] text-[#666]">{f.date}</div>
                <div className="pl-[7px] text-[#666]">{f.type}</div>
              </div>
            ))}
          </div>
          <div className="h-[16px] mb-[1px] bg-[#fafafa] flex items-center shrink-0">
            <ChevronLeft size={13} className="ml-[3px] text-[#333]" strokeWidth={2.500} />
            <div className="ml-[2px] w-[319px] h-full bg-[#cdcdcd]" />
            <ChevronRight size={13} className="ml-auto mr-[2px] text-[#333]" strokeWidth={2.500} />
          </div>
        </div>
      </div>
      <div className="flex-1 bg-[#f0f0f0] relative">
        <div className="flex items-center mt-[10px]">
          <span className="ml-[130px] w-[59px]">File <span className="underline">n</span>ame:</span>
          <div className="w-[218px] h-[23px] bg-white border border-[#7a7a7a] flex items-center justify-end pr-[1px]">
            <ChevronDown size={17} strokeWidth={1} className="text-[#444]" />
          </div>
          <div className="ml-[14px] w-[187px] h-[23px] bg-[#e1e1e1] border border-[#adadad] flex items-center pl-[3px] whitespace-nowrap overflow-hidden">
            <span className="flex-1 overflow-hidden">All Word Templates (*.dotx;*.dc</span>
            <ChevronDown size={17} strokeWidth={1} className="shrink-0 text-[#444]" />
          </div>
        </div>
        <div className="flex items-center mt-[6px]">
          <span className="ml-[352px] w-[43px]">Too<span className="underline">l</span>s</span>
          <div className="w-0 h-0 border-x-[4px] border-x-transparent border-t-[4px] border-t-[#222]" />
          <div className="ml-[17px] w-[86px] h-[24px] bg-[#e1e1e1] border border-[#adadad] flex items-center justify-center"><span><span className="underline">O</span>pen</span></div>
          <div className="ml-[14px] w-[87px] h-[24px] bg-[#e1e1e1] border border-[#adadad] flex items-center justify-center">Cancel</div>
        </div>
        <svg width="10" height="10" viewBox="0 0 10 10" className="absolute right-[2px] bottom-[1px]">
          <path d="M8 2h1v1H8zM5 5h1v1H5zM8 5h1v1H8zM2 8h1v1H2zM5 8h1v1H5zM8 8h1v1H8z" fill="#a0a0a0" />
        </svg>
      </div>
    </div>
  );
}

export default function App() {
  return (
    <div className="relative w-[1280px] h-[1024px] overflow-hidden bg-[#f0f0f0] font-['Noto_Sans',sans-serif] text-[12px] tracking-[-0.4px]">
      <TitleBar />
      <TabRow />
      <Ribbon />
      <HRuler />
      <DocArea />
      <StatusBar />
      <Taskbar />
      <BackDialog />
      <AttachDialog />
    </div>
  );
}
